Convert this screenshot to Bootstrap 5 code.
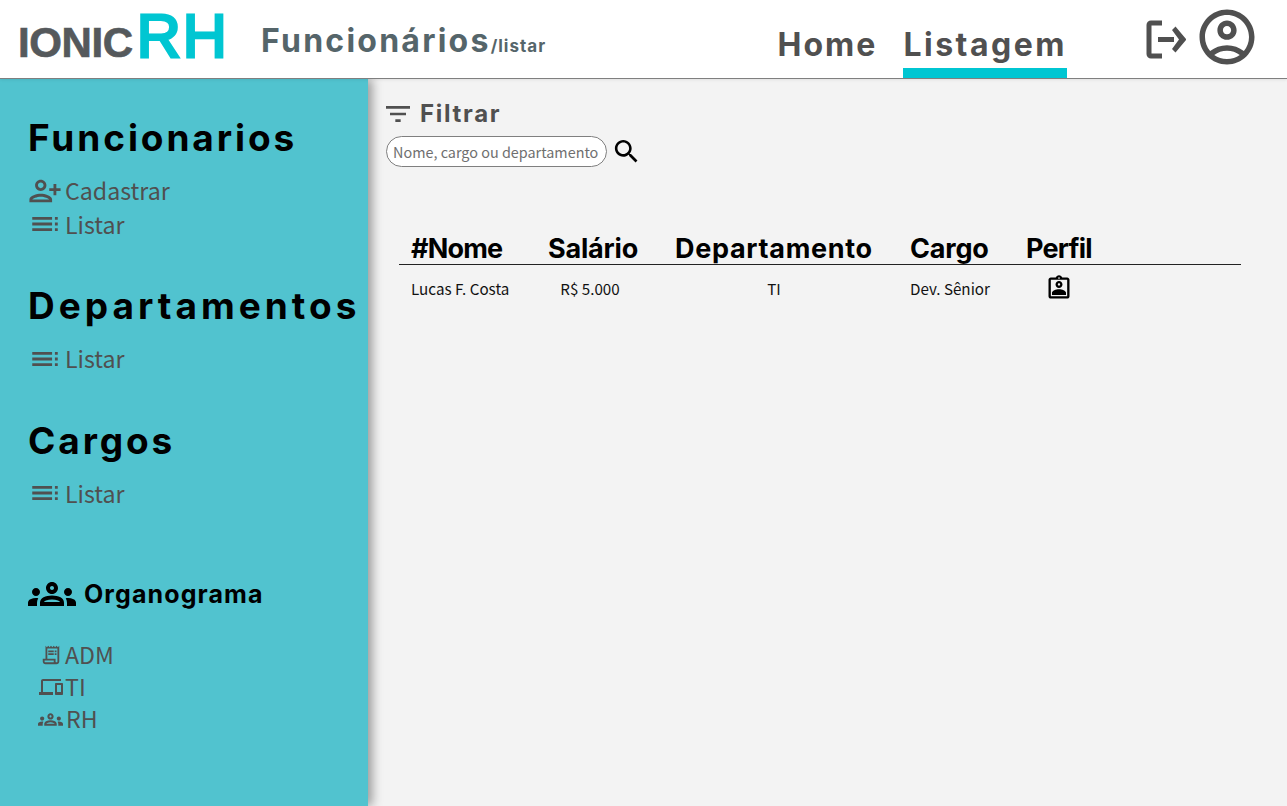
<!doctype html>
<html lang="pt-BR">
<head>
<meta charset="utf-8">
<title>IonicRH</title>
<link href="https://cdn.jsdelivr.net/npm/bootstrap@5.3.0/dist/css/bootstrap.min.css" rel="stylesheet">
<style>
html,body{height:100%}
body{background:#f3f3f3;font-family:"Noto Sans CJK SC","Noto Sans",sans-serif;overflow:hidden}
svg{fill:currentColor;flex:none;display:block}
.ic-k{color:#000}
.topbar{height:79px;background:#fff;border-bottom:1px solid #7f7f7f;padding:0;position:relative;z-index:3;box-shadow:0 1px 3px rgba(0,0,0,.08)}
.logo{font-family:"Liberation Sans",sans-serif;font-weight:700;margin-left:18px;width:207px;line-height:1;align-items:baseline;height:62px;margin-top:-5px}
.logo-a{font-size:42px;color:#55595c;letter-spacing:-.4px;text-transform:uppercase;-webkit-text-stroke:.7px #55595c}
.logo-b{font-size:61px;color:#00c6d2;letter-spacing:2px;font-weight:400;-webkit-text-stroke:3px #00c6d2;margin-left:4px}
.page-ttl{font-family:Inter,"Liberation Sans",sans-serif;font-weight:700;color:#55656a;font-size:32px;letter-spacing:2.25px;margin-left:36px;margin-top:4px;line-height:1;white-space:nowrap}
.page-ttl small{font-size:17px;letter-spacing:1px}
.mainnav{gap:26px;margin-left:auto;align-self:stretch}
.mainnav a{display:block;height:78px;padding-top:25px;font-family:Inter,"Liberation Sans",sans-serif;font-weight:700;font-size:32px;letter-spacing:2px;line-height:40px;color:#505050;text-decoration:none}
.mainnav a.current{border-bottom:10px solid #00c6d2;letter-spacing:2.5px}
.top-icons{color:#505050;gap:8px;margin-left:73px;margin-right:27px;margin-top:-4px}
.ic-out{margin-top:4px}
.side{width:368px;background:#51c3cf;box-shadow:4px 0 10px rgba(0,0,0,.38);padding:37px 0 0 28px;position:relative;z-index:2;height:727px;flex:none}
.side h2{font-family:Inter,"Liberation Sans",sans-serif;font-weight:700;font-size:37px;letter-spacing:2.9px;color:#000;line-height:44px;margin:0 0 14px;white-space:nowrap}
.side h2.h2-wide{letter-spacing:4px}
.side-link{color:#505050;font-size:23.2px;line-height:33.5px;text-decoration:none;gap:3px;height:33.5px;white-space:nowrap}
.org-link{height:32px}
.side-sec{margin-bottom:43px}
.org-ttl{font-family:Inter,"Liberation Sans",sans-serif;font-weight:700;font-size:25px;letter-spacing:1.1px;color:#000;gap:8px;margin-top:60px;margin-bottom:21px;line-height:32px}
.ic-adm{margin-left:12px}
.ic-ti{margin-left:11px;margin-right:-1px}
.ic-rh{margin-left:10px}
.work{flex:1 1 auto;min-width:0;padding:19px 46px 0 18px}
.filter-ttl{font-family:Inter,"Liberation Sans",sans-serif;font-weight:700;font-size:24px;letter-spacing:1.7px;color:#505050;gap:6px;line-height:32px}
.ic-filter{margin-left:-4px}
.srch{width:221px;height:31px;border:1px solid #7f7f7f;border-radius:16px;background:#fff;font-size:14.4px;padding:0 0 0 6px;color:#666;outline:0}
.srch::placeholder{color:#6f6f6f;opacity:1}
.srch-row{margin-top:6px}
.grid-wrap{margin-top:62px;margin-left:13px}
.grid-wrap table{width:842px;table-layout:fixed;margin:0;--bs-table-bg:transparent}
.grid-wrap th{font-family:Inter,"Liberation Sans",sans-serif;font-weight:700;font-size:27px;letter-spacing:-.8px;color:#000;padding:0 0 0 12px;line-height:30px;height:35px;border-bottom:1px solid #222;white-space:nowrap;vertical-align:bottom}
.grid-wrap th.th-mid{letter-spacing:-.2px}
.grid-wrap th.th-wide{letter-spacing:.7px}
.grid-wrap td{font-size:15.2px;color:#111;padding:8px 0 0 12px;border:0;line-height:30px;vertical-align:middle}
.grid-wrap td.sal-cell{padding:8px 19px 0 0;text-align:center}
.grid-wrap td.dep-cell{padding:8px 13px 0 0;text-align:center}
.perfil-cell{width:66px}
</style>
</head>
<body>
<nav class="navbar topbar d-flex flex-nowrap align-items-center">
  <div class="logo d-flex"><span class="logo-a">ionic</span><span class="logo-b">RH</span></div>
  <div class="page-ttl">Funcionários<small>/listar</small></div>
  <div class="mainnav d-flex">
    <a href="#">Home</a>
    <a href="#" class="current">Listagem</a>
  </div>
  <div class="top-icons d-flex align-items-center">
    <svg class="ic-out" width="46" height="46" viewBox="0 0 46 46"><path d="M22 7H11a2 2 0 0 0-2 2V38a2 2 0 0 0 2 2H22" fill="none" stroke="currentColor" stroke-width="5"/><path d="M18 21h16v5H18zM32 14l3.500-3.500 11 13-11 13L32 33l7-9.500z"/></svg>
    <svg width="66" height="66" viewBox="0 0 24 24"><path d="M12 2C6.480 2 2 6.480 2 12s4.480 10 10 10 10-4.480 10-10S17.520 2 12 2zM7.350 18.500C8.660 17.560 10.260 17 12 17s3.340.560 4.650 1.500C15.340 19.440 13.740 20 12 20s-3.340-.560-4.650-1.500zm10.790-1.380C16.450 15.800 14.320 15 12 15s-4.450.800-6.140 2.120C4.700 15.730 4 13.950 4 12c0-4.420 3.580-8 8-8s8 3.580 8 8c0 1.950-.700 3.730-1.860 5.120zM12 6c-1.930 0-3.500 1.570-3.500 3.500S10.070 13 12 13s3.500-1.570 3.500-3.500S13.930 6 12 6zm0 5c-.830 0-1.500-.670-1.500-1.500S11.170 8 12 8s1.500.670 1.500 1.500S12.830 11 12 11z"/></svg>
  </div>
</nav>
<div class="d-flex">
  <aside class="side">
    <div class="side-sec">
      <h2>Funcionarios</h2>
      <a href="#" class="side-link d-flex align-items-center"><svg width="34" height="34" viewBox="0 0 24 24"><g transform="matrix(-1 0 0 1 24 0)"><path d="M15 12c2.210 0 4-1.790 4-4s-1.790-4-4-4-4 1.790-4 4 1.790 4 4 4zm0-6c1.100 0 2 .900 2 2s-.900 2-2 2-2-.900-2-2 .900-2 2-2zm0 8c-2.670 0-8 1.340-8 4v2h16v-2c0-2.660-5.330-4-8-4zm-6 4c.220-.720 3.310-2 6-2 2.700 0 5.800 1.290 6 2H9zm-3-3v-3h3v-2H6V7H4v3H1v2h3v3h2z"/></g></svg>Cadastrar</a>
      <a href="#" class="side-link d-flex align-items-center"><svg width="34" height="34" viewBox="0 0 24 24"><path d="M3 9h14V7H3v2zm0 4h14v-2H3v2zm0 4h14v-2H3v2zm16 0h2v-2h-2v2zm0-10v2h2V7h-2zm0 6h2v-2h-2v2z"/></svg>Listar</a>
    </div>
    <div class="side-sec">
      <h2 class="h2-wide">Departamentos</h2>
      <a href="#" class="side-link d-flex align-items-center"><svg width="34" height="34" viewBox="0 0 24 24"><path d="M3 9h14V7H3v2zm0 4h14v-2H3v2zm0 4h14v-2H3v2zm16 0h2v-2h-2v2zm0-10v2h2V7h-2zm0 6h2v-2h-2v2z"/></svg>Listar</a>
    </div>
    <div class="side-sec">
      <h2>Cargos</h2>
      <a href="#" class="side-link d-flex align-items-center"><svg width="34" height="34" viewBox="0 0 24 24"><path d="M3 9h14V7H3v2zm0 4h14v-2H3v2zm0 4h14v-2H3v2zm16 0h2v-2h-2v2zm0-10v2h2V7h-2zm0 6h2v-2h-2v2z"/></svg>Listar</a>
    </div>
    <div class="org-ttl d-flex align-items-center"><svg class="ic-k" width="48" height="48" viewBox="0 0 24 24"><path d="M4 13c1.100 0 2-.900 2-2 0-1.100-.900-2-2-2s-2 .900-2 2c0 1.100.900 2 2 2zm1.130 1.100C4.760 14.040 4.390 14 4 14c-.990 0-1.930.210-2.780.580C.480 14.900 0 15.620 0 16.430V18h4.500v-1.610c0-.830.230-1.610.630-2.290zM20 13c1.100 0 2-.900 2-2 0-1.100-.900-2-2-2s-2 .900-2 2c0 1.100.900 2 2 2zm4 3.430c0-.810-.480-1.530-1.220-1.850C21.930 14.210 20.990 14 20 14c-.390 0-.760.040-1.130.100.400.680.630 1.460.630 2.290V18H24v-1.570zm-7.760-2.780c-1.170-.520-2.610-.900-4.240-.900-1.630 0-3.070.390-4.240.900C6.680 14.130 6 15.210 6 16.390V18h12v-1.610c0-1.180-.680-2.260-1.760-2.740zM8.070 16c.090-.230.130-.390.910-.690.970-.380 1.990-.560 3.020-.560s2.050.180 3.020.560c.770.300.810.460.910.690H8.070zM12 8c.550 0 1 .450 1 1s-.450 1-1 1-1-.450-1-1 .450-1 1-1m0-2c-1.660 0-3 1.340-3 3s1.340 3 3 3 3-1.340 3-3-1.340-3-3-3z"/></svg>Organograma</div>
    <a href="#" class="side-link org-link d-flex align-items-center"><svg class="ic-adm" width="22" height="22" viewBox="0 0 24 24"><path d="M19.500 3.500 18 2l-1.500 1.500L15 2l-1.500 1.500L12 2l-1.500 1.500L9 2 7.500 3.500 6 2v14H3v3c0 1.660 1.340 3 3 3h12c1.660 0 3-1.340 3-3V2l-1.500 1.500zM15 20H6c-.550 0-1-.450-1-1v-1h10v2zm4-1c0 .550-.450 1-1 1s-1-.450-1-1v-3H8V5h11v14zM9 7h6v2H9zm7 0h2v2h-2zM9 10h6v2H9zm7 0h2v2h-2z"/></svg>ADM</a>
    <a href="#" class="side-link org-link d-flex align-items-center"><svg class="ic-ti" width="24" height="24" viewBox="0 0 24 24"><path d="M4 6h18V4H4c-1.100 0-2 .900-2 2v11H0v3h14v-3H4V6zm19 2h-6c-.550 0-1 .450-1 1v10c0 .550.450 1 1 1h6c.550 0 1-.450 1-1V9c0-.550-.450-1-1-1zm-1 9h-4v-7h4v7z"/></svg>TI</a>
    <a href="#" class="side-link org-link d-flex align-items-center"><svg class="ic-rh" width="25" height="25" viewBox="0 0 24 24"><path d="M4 13c1.100 0 2-.900 2-2 0-1.100-.900-2-2-2s-2 .900-2 2c0 1.100.900 2 2 2zm1.130 1.100C4.760 14.040 4.390 14 4 14c-.990 0-1.930.210-2.780.580C.480 14.900 0 15.620 0 16.430V18h4.500v-1.610c0-.830.230-1.610.630-2.290zM20 13c1.100 0 2-.900 2-2 0-1.100-.900-2-2-2s-2 .900-2 2c0 1.100.900 2 2 2zm4 3.430c0-.810-.480-1.530-1.220-1.850C21.930 14.210 20.990 14 20 14c-.390 0-.760.040-1.130.100.400.680.630 1.460.630 2.290V18H24v-1.570zm-7.760-2.780c-1.170-.520-2.610-.900-4.240-.900-1.630 0-3.070.390-4.240.900C6.680 14.130 6 15.210 6 16.390V18h12v-1.610c0-1.180-.680-2.260-1.760-2.740zM8.070 16c.090-.230.130-.390.910-.690.970-.380 1.990-.560 3.020-.560s2.050.180 3.020.560c.770.300.810.460.910.690H8.070zM12 8c.550 0 1 .450 1 1s-.450 1-1 1-1-.450-1-1 .450-1 1-1m0-2c-1.660 0-3 1.340-3 3s1.340 3 3 3 3-1.340 3-3-1.340-3-3-3z"/></svg>RH</a>
  </aside>
  <main class="work">
    <div class="filter-ttl d-flex align-items-center"><svg class="ic-filter" width="32" height="32" viewBox="0 0 24 24"><path d="M10 18h4v-2h-4v2zM3 6v2h18V6H3zm3 7h12v-2H6v2z"/></svg>Filtrar</div>
    <div class="d-flex align-items-center gap-1 srch-row">
      <input class="srch" type="text" placeholder="Nome, cargo ou departamento" aria-label="Buscar">
      <svg class="ic-k" width="31" height="31" viewBox="0 0 24 24"><path d="M15.500 14h-.790l-.280-.270C15.410 12.590 16 11.110 16 9.500 16 5.910 13.090 3 9.500 3S3 5.910 3 9.500 5.910 16 9.500 16c1.610 0 3.090-.590 4.230-1.570l.270.280v.790l5 4.990L20.490 19l-4.990-5zm-6 0C7.010 14 5 11.990 5 9.500S7.010 5 9.500 5 14 7.010 14 9.500 11.990 14 9.500 14z"/></svg>
    </div>
    <div class="grid-wrap">
      <table class="table">
        <colgroup><col style="width:137px"><col style="width:127px"><col style="width:235px"><col style="width:116px"><col style="width:227px"></colgroup>
        <thead><tr><th>#Nome</th><th class="th-mid">Salário</th><th class="th-wide">Departamento</th><th class="th-mid">Cargo</th><th>Perfil</th></tr></thead>
        <tbody><tr>
          <td>Lucas F. Costa</td>
          <td class="sal-cell">R$ 5.000</td>
          <td class="dep-cell">TI</td>
          <td>Dev. Sênior</td>
          <td><div class="perfil-cell d-flex justify-content-center"><svg class="ic-k" width="28" height="28" viewBox="0 0 24 24"><path d="M19 3h-4.180C14.400 1.840 13.300 1 12 1s-2.400.840-2.820 2H5c-1.100 0-2 .900-2 2v14c0 1.100.900 2 2 2h14c1.100 0 2-.900 2-2V5c0-1.100-.900-2-2-2zm-7-.250c.410 0 .750.340.750.750s-.340.750-.750.750-.750-.340-.750-.750.340-.750.750-.750zM19 19H5V5h14v14zm-7-7c1.650 0 3-1.350 3-3s-1.350-3-3-3-3 1.350-3 3 1.350 3 3 3zm0-4c.550 0 1 .450 1 1s-.450 1-1 1-1-.450-1-1 .450-1 1-1zm0 5c-2.670 0-6 1.340-6 3v2h12v-2c0-1.660-3.330-3-6-3z"/></svg></div></td>
        </tr></tbody>
      </table>
    </div>
  </main>
</div>
<script src="https://cdn.jsdelivr.net/npm/bootstrap@5.3.0/dist/js/bootstrap.bundle.min.js"></script>
</body>
</html>
